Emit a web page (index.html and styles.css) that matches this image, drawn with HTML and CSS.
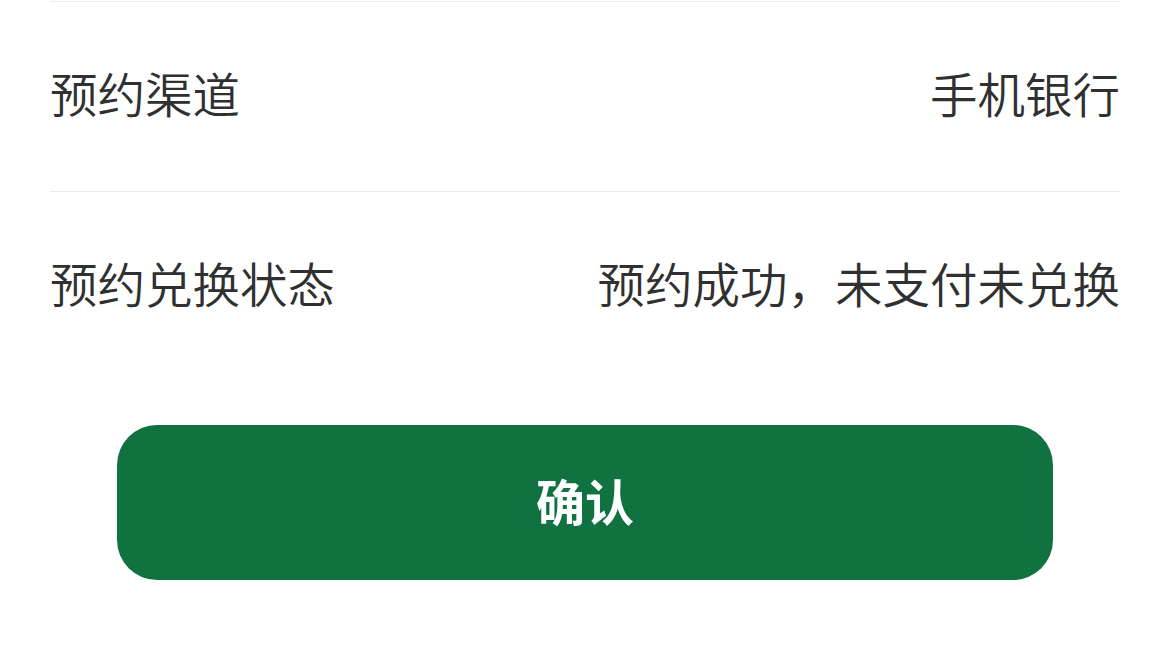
FILE: index.html
```html
<!DOCTYPE html>
<html lang="zh-CN">
<head>
<meta charset="utf-8">
<link rel="stylesheet" href="styles.css">
</head>
<body>
<div class="page">
  <div class="list">
    <div class="row">
      <span class="label">预约渠道</span>
      <span class="value">手机银行</span>
    </div>
    <div class="row">
      <span class="label">预约兑换状态</span>
      <span class="value">预约成功，未支付未兑换</span>
    </div>
  </div>
  <div class="actions">
    <button class="confirm">确认</button>
  </div>
</div>
</body>
</html>
```
FILE: styles.css
```css
html, body {
  margin: 0;
  padding: 0;
  background: #ffffff;
}
body {
  font-family: "Noto Sans CJK SC", "Noto Sans", sans-serif;
  color: #303030;
  width: 1170px;
  height: 646px;
  overflow: hidden;
}
.page {
  padding-top: 1px;
}
.list {
  margin: 0 50px;
}
.row {
  display: flex;
  justify-content: space-between;
  align-items: center;
  height: 181px;
  padding-bottom: 8px;
  border-top: 1px solid #ececf0;
  font-size: 47.5px;
  font-weight: 350;
  line-height: 1;
}
.label, .value {
  white-space: nowrap;
}
.actions {
  display: flex;
  justify-content: center;
  margin-top: 44px;
}
.confirm {
  width: 936px;
  height: 155px;
  border: none;
  border-radius: 40px;
  background: #0f7240;
  color: #ffffff;
  font-family: "Noto Sans CJK SC", sans-serif;
  font-size: 49px;
  font-weight: 700;
  padding: 0 0 6px 0;
}
```
